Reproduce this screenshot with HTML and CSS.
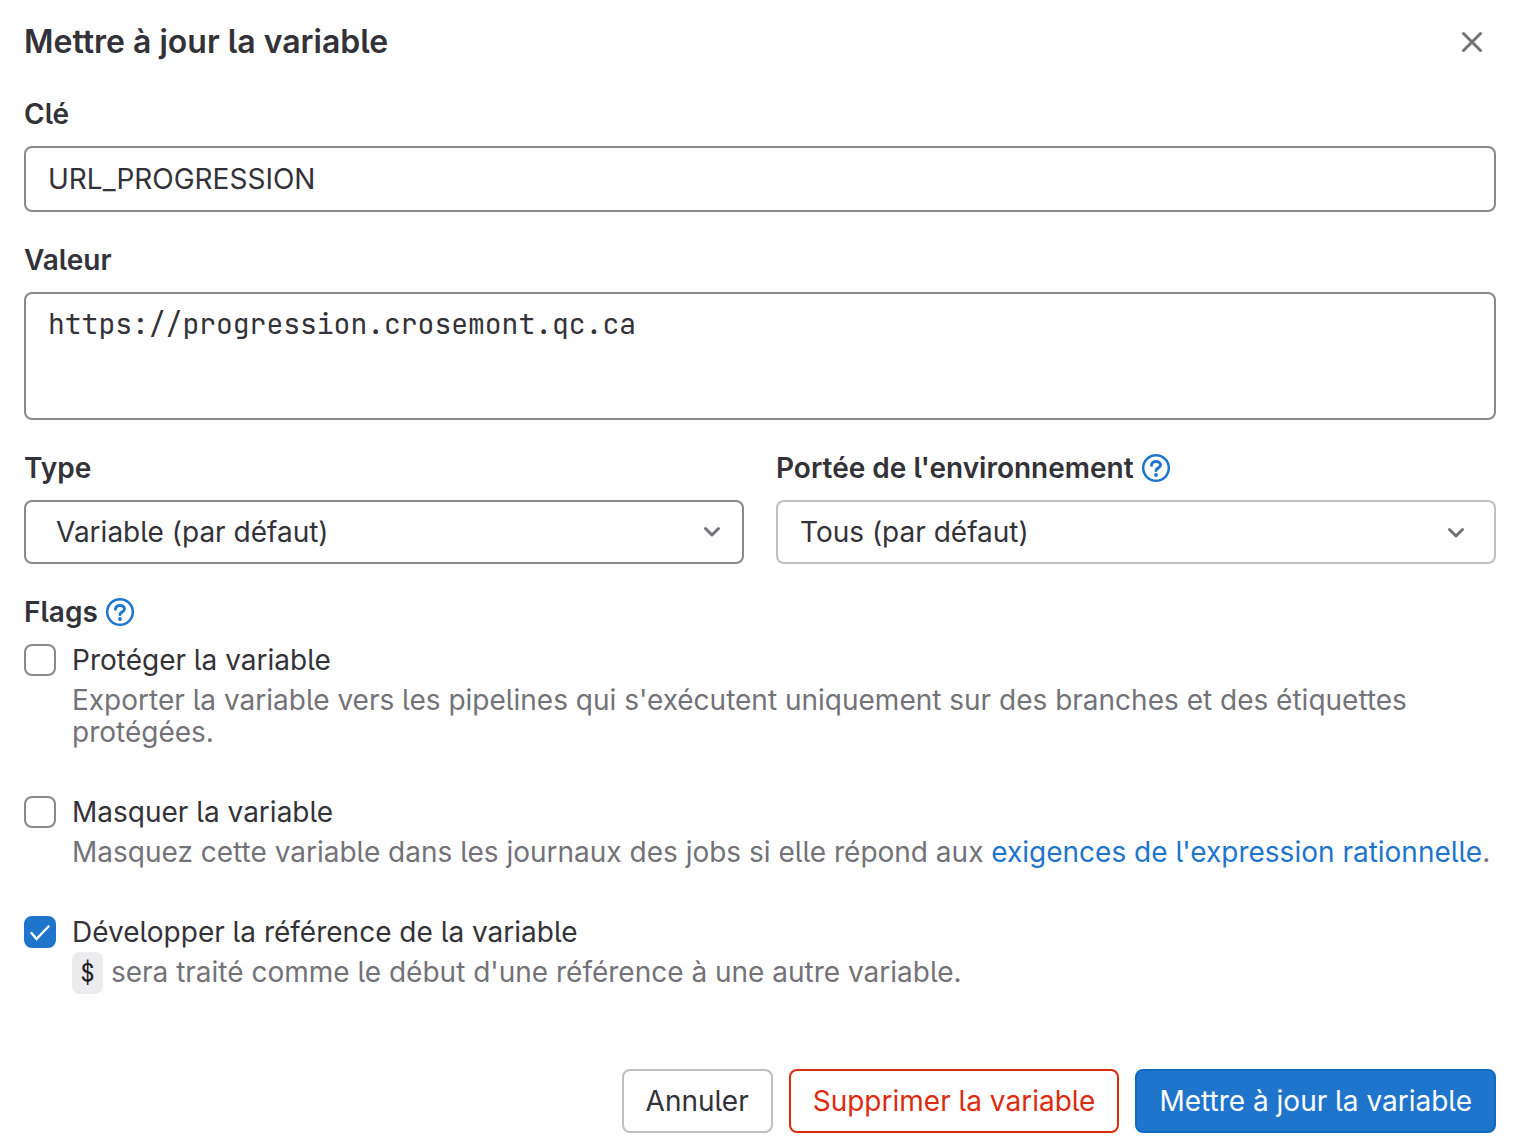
FILE: index.html
```html
<!DOCTYPE html>
<html lang="fr">
<head>
    <meta charset="UTF-8">
    <meta name="viewport" content="width=device-width, initial-scale=1.0">
    <title>Mettre à jour la variable</title>
    <link rel="stylesheet" href="styles.css">
</head>
<body>
    <form class="modal">
        <header class="modal-header">
            <h2>Mettre à jour la variable</h2>
            <button type="button" class="close" aria-label="Fermer">
                <svg viewBox="0 0 32 32"><path d="M7.500 7.500l17 17M24.500 7.500l-17 17"/></svg>
            </button>
        </header>

        <div class="field">
            <label for="key">Clé</label>
            <input id="key" class="control" type="text" value="URL_PROGRESSION">
        </div>

        <div class="field">
            <label for="value">Valeur</label>
            <textarea id="value" class="control code-area" spellcheck="false">https://progression.crosemont.qc.ca</textarea>
        </div>

        <div class="columns">
            <div class="field">
                <label for="type">Type</label>
                <div class="select-wrap">
                    <select id="type" class="control type-select">
                        <option>Variable (par défaut)</option>
                    </select>
                    <svg class="chevron" viewBox="0 0 32 32"><path d="M9.500 12.500l6.500 6.500 6.500-6.500"/></svg>
                </div>
            </div>
            <div class="field">
                <div class="label-row">
                    <label for="scope">Portée de l'environnement</label>
                    <a href="#" class="help" aria-label="Aide">
                        <svg viewBox="0 0 32 32"><circle cx="16" cy="16" r="12.800"/><path d="M11.500 13.200c0-2.300 2-3.700 4.500-3.700s4.500 1.400 4.500 3.500c0 3.200-4.500 3-4.500 5.500"/><circle class="dot" cx="16" cy="23" r="1.900"/></svg>
                    </a>
                </div>
                <div class="select-wrap">
                    <select id="scope" class="control scope-select">
                        <option>Tous (par défaut)</option>
                    </select>
                    <svg class="chevron chevron-scope" viewBox="0 0 32 32"><path d="M9.500 13.500l6.500 6.500 6.500-6.500"/></svg>
                </div>
            </div>
        </div>

        <fieldset class="flags">
            <legend class="label-row">
                Flags
                <a href="#" class="help" aria-label="Aide">
                    <svg viewBox="0 0 32 32"><circle cx="16" cy="16" r="12.800"/><path d="M11.500 13.200c0-2.300 2-3.700 4.500-3.700s4.500 1.400 4.500 3.500c0 3.200-4.500 3-4.500 5.500"/><circle class="dot" cx="16" cy="23" r="1.900"/></svg>
                </a>
            </legend>
            <div class="flag">
                <input type="checkbox" id="protect">
                <div>
                    <label for="protect">Protéger la variable</label>
                    <p>Exporter la variable vers les pipelines qui s'exécutent uniquement sur des branches et des étiquettes protégées.</p>
                </div>
            </div>
            <div class="flag">
                <input type="checkbox" id="mask">
                <div>
                    <label for="mask">Masquer la variable</label>
                    <p>Masquez cette variable dans les journaux des jobs si elle répond aux <a href="#">exigences de l'expression rationnelle</a>.</p>
                </div>
            </div>
            <div class="flag">
                <input type="checkbox" id="expand" checked>
                <div>
                    <label for="expand">Développer la référence de la variable</label>
                    <p><code>$</code> sera traité comme le début d'une référence à une autre variable.</p>
                </div>
            </div>
        </fieldset>

        <footer class="modal-footer">
            <button type="button" class="btn">Annuler</button>
            <button type="button" class="btn btn-danger">Supprimer la variable</button>
            <button type="submit" class="btn btn-confirm">Mettre à jour la variable</button>
        </footer>
    </form>
</body>
</html>
```
FILE: styles.css
```css
* {
    box-sizing: border-box;
}

body {
    margin: 0;
    background-color: #fff;
    color: #333238;
    font-family: Inter, sans-serif;
    font-size: 28px;
    font-feature-settings: "cv05"; /* l with a tail */
    line-height: 32px;
}

input,
select,
textarea,
button {
    font: inherit;
    font-feature-settings: inherit;
    color: inherit;
}

a {
    color: #1f75cb;
    text-decoration: none;
}

svg {
    display: block;
    width: 32px;
    height: 32px;
    fill: none;
    stroke: currentColor;
}

.modal {
    padding: 18px 25px 14px 24px;
}

.modal-header {
    display: flex;
    justify-content: space-between;
    align-items: center;
    height: 48px;
    margin-bottom: 32px;
}

.modal-header h2 {
    margin: 0;
    font-size: 32px;
    font-weight: 600;
}

.close {
    padding: 8px;
    border: none;
    background: none;
    color: #737278;
    cursor: pointer;
}

.close svg {
    stroke-width: 3;
    stroke-linecap: round;
}

.field {
    display: flex;
    flex-direction: column;
    gap: 16px;
    margin-bottom: 32px;
}

.field label,
.label-row {
    font-weight: 600;
}

.label-row {
    display: flex;
    align-items: center;
    gap: 6px;
}

.help svg {
    stroke-width: 2.5;
    stroke-linecap: round;
}

.help path {
    stroke-width: 3;
}

.help .dot {
    fill: currentColor;
    stroke: none;
}

.control {
    display: block;
    width: 100%;
    height: 64px;
    padding: 0 22px;
    border: 2px solid #89888d;
    border-radius: 8px;
    background-color: #fff;
    outline: none;
}

#key {
    height: 66px;
}

.code-area {
    height: 128px;
    padding: 14px 22px;
    font-family: "JetBrains Mono", "Liberation Mono", monospace;
    font-feature-settings: normal;
    font-variant-ligatures: none;
    resize: none;
}

.columns {
    display: grid;
    grid-template-columns: 1fr 1fr;
    gap: 32px;
}

.select-wrap {
    position: relative;
}

.control.type-select {
    padding-left: 30px;
    appearance: none;
}

.control.scope-select {
    border-color: #bfbfc3;
    appearance: none;
}

.chevron {
    position: absolute;
    top: 16px;
    right: 16px;
    color: #737278;
    stroke-width: 3;
    stroke-linecap: round;
    stroke-linejoin: round;
    pointer-events: none;
}

.chevron-scope {
    right: 24px;
}

.flags {
    margin: 0;
    padding: 0;
    border: none;
}

.flags legend {
    padding: 0;
    margin-bottom: 16px;
}

.flag {
    display: flex;
    align-items: flex-start;
    gap: 16px;
    margin-bottom: 48px;
}

.flag input {
    flex: none;
    width: 32px;
    height: 32px;
    margin: 0;
    border: 2px solid #89888d;
    border-radius: 8px;
    background-color: #fff;
    appearance: none;
}

.flag input:checked {
    border-color: #1f75cb;
    background: #1f75cb url("data:image/svg+xml,%3Csvg xmlns='http://www.w3.org/2000/svg' viewBox='0 0 28 28' fill='none' stroke='white' stroke-width='2.5' stroke-linecap='round' stroke-linejoin='miter'%3E%3Cpath d='M5.500 15l5 6L22.500 8.500'/%3E%3C/svg%3E") center / 28px 28px no-repeat;
}

.flag label {
    display: block;
    margin-bottom: 8px;
}

.flag p {
    margin: 0;
    color: #737278;
}

.flag code {
    padding: 4px 8px;
    border-radius: 8px;
    background-color: #ececef;
    color: #1f1e24;
    font-family: "JetBrains Mono", "Liberation Mono", monospace;
    font-size: 25px;
}

.modal-footer {
    display: flex;
    justify-content: flex-end;
    gap: 16px;
    padding-top: 32px;
}

.btn {
    height: 64px;
    padding: 0 22px;
    border: 2px solid #bfbfc3;
    border-radius: 8px;
    background-color: #fff;
    cursor: pointer;
}

.btn-danger {
    border-color: #dd2b0e;
    color: #dd2b0e;
}

.btn-confirm {
    border-color: #1068bf;
    background-color: #1f75cb;
    color: #fff;
}
```
